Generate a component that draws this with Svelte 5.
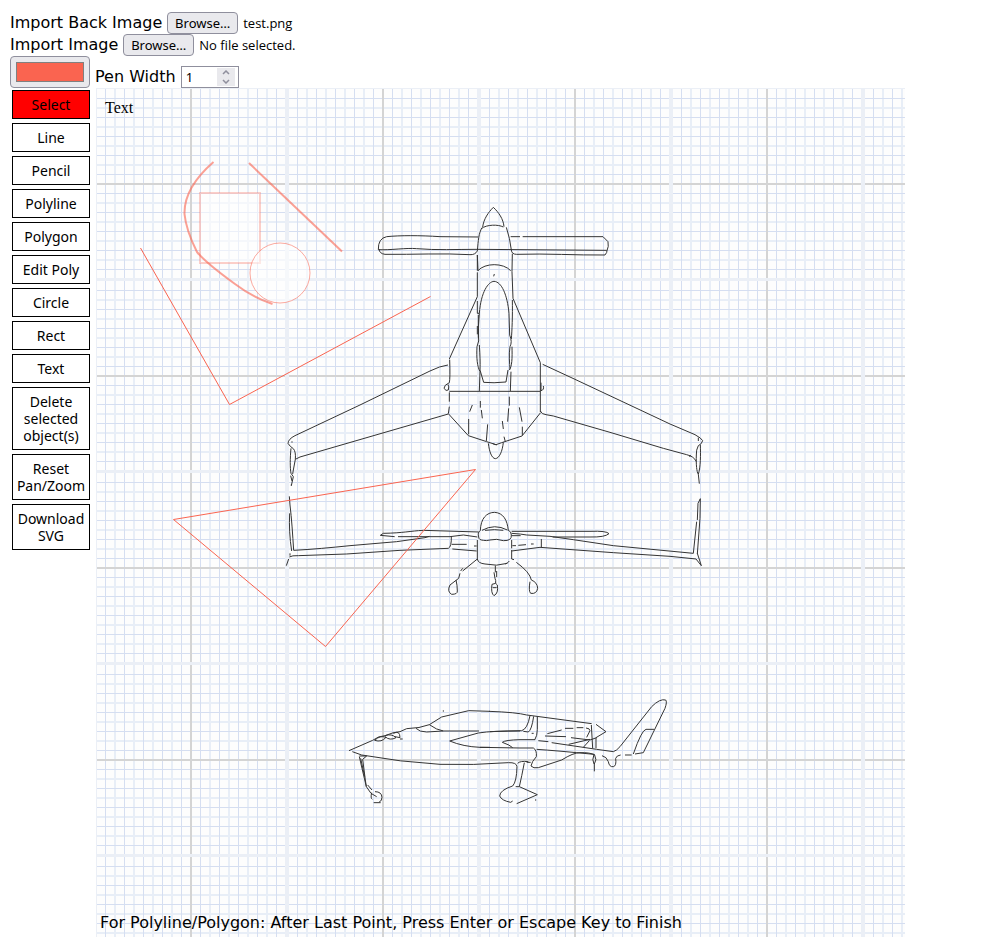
<script>
  const tools = ['Select', 'Line', 'Pencil', 'Polyline', 'Polygon', 'Edit Poly', 'Circle', 'Rect', 'Text'];
  const actions = ['Delete selected object(s)', 'Reset Pan/Zoom', 'Download SVG'];

  let active = $state('Select');
  let color = $state('#fa6450');
  let penWidth = $state(1);
  let backName = $state('test.png');
  let imageName = $state('No file selected.');
  let backInput;
  let imageInput;

  // Grid cell offsets inside one 192px tile
  const thin = [10, 29, 48, 67, 86, 105, 124, 143, 162, 181];
  const wide = [19, 38, 57, 76, 114, 133, 152, 171];

  // Aircraft blueprint, drawn in sections at three units per pixel
  const sections = [
    { x: 360, y: 195, d: 'M368 96C371 72 385 52 400 37C416 52 430 72 432 95M364 101C380 88 415 88 430 96M366 98C356 115 355 135 352 168Q345 180 330 179C250 174 160 179 75 178Q58 176 57 162M355 126L240 125C180 121 120 121 80 125Q54 130 55 164C90 166 140 158 170 161C230 166 290 163 352 163L740 166M439 97Q450 130 454 165Q455 178 470 178C560 175 650 181 735 180Q742 172 741 166M452 125H480M488 125H729L744 140Q747 155 741 167M352 180L354 227C375 203 430 203 452 227M403 237L401 244' },
    { x: 420, y: 255, d: 'M172 0V47M172 52V125L88 312M277 -4L276 50L279 130L361 323M178 175C183 110 205 80 222 79C245 80 262 120 267 175L269 240M172 138V175H178M172 213V238M178 175Q173 220 176 258L171 275C169 310 172 335 180 350L178 408M175 180V250M178 270C180 300 181 325 180 345L191 382Q220 385 258 381L264 345M277 135C278 180 276 230 274 252M269 240C275 255 275 265 270 275C266 300 269 325 270 343M276 275C277 310 276 335 268 345M273 350L271 408M88 409H361M89 314Q91 370 88 383Q72 390 72 400Q78 410 85 405Q88 395 84 388M361 323V472M363 383V407Q373 405 370 393M88 412V440M88 455L85 476L145 542L200 560L228 569L245 563L306 543L361 474M157 450L149 470M146 492V538M181 438V458M184 465L187 490M203 508L199 558M268 425V452M266 460L263 500M247 498L250 522M252 545L256 560M298 457L306 500M307 515V540M205 565C208 590 215 610 226 611C238 610 247 590 250 562M218 566L230 570' },
    { x: 270, y: 355, d: 'M534 30Q510 33 480 48L270 150L75 242Q55 252 54 265Q60 275 70 281Q78 290 76 313L70 345L68 357M76 313L90 306L345 232L535 177M63 280C60 310 60 340 63 355L70 365L64 392M62 362L66 378M66 259v4' },
    { x: 530, y: 355, d: 'M38 28L135 73L420 207L495 239Q515 250 518 257Q515 268 505 272Q498 285 499 300C498 330 500 350 505 358L508 386M511 270C512 300 512 335 505 358M31 168Q35 178 48 179L70 183L240 232L400 280L470 299Q492 304 499 320M505 248V258M478 305L483 301' },
    { x: 270, y: 485, d: 'M64 -2v4M58 34L60 60C65 100 68 150 71 196M59 85C57 120 59 160 65 198M71 196C130 193 180 188 240 182L380 170L465 158L478 154M60 205v7M58 216Q66 211 85 212L230 207L390 196L535 190Q545 186 544 153M545 178H590M547 192L620 198M56 222L49 242M626 141L460 136C420 138 400 144 340 145L331 151L374 155M384 155H540L580 150L622 156M631 137C632 100 650 82 674 82C700 84 712 105 715 137M636 136Q674 115 712 135M645 136Q674 132 700 136M631 137Q622 142 626 156Q626 165 640 166Q650 168 660 165Q680 160 700 167Q726 168 724 150Q724 139 715 136M622 165V222Q624 235 645 237Q680 245 712 235M622 222L578 258M578 250L572 258M570 265L566 280L540 300Q530 320 545 328Q563 328 562 318Q562 300 558 285M676 242V262M672 262L675 280Q678 285 677 295M666 298Q662 325 672 332Q686 325 682 300L677 295ZM668 308H680M680 258v18M612 183h8' },
    { x: 480, y: 485, d: 'M95 139H330Q380 137 387 146Q375 157 330 156H218M95 152H122M95 145Q125 147 140 150L210 154L280 164L400 182L640 205M95 198L180 187L400 203L570 214L648 222L664 242L652 205M184 162V187M95 165V190M97 182H108M115 181L138 179M153 177h8M95 195V222L102 224M88 228Q84 234 76 237M109 232Q150 262 154 285M150 290Q145 318 152 325Q170 328 173 310Q172 292 154 285M640 205L650 110M652 105L654 55L661 41L660 100L652 207' },
    { x: 340, y: 690, d: 'M27 182L98 151Q115 138 135 137Q160 126 180 125L200 116Q240 115 268 104L305 81L386 62L450 64M228 115Q238 126 260 126L310 123H417M268 104Q290 120 310 123M104 151Q125 158 138 142Q120 135 104 151M135 140Q150 153 168 143Q155 130 135 137M160 130Q180 120 180 143L165 140M180 147h8M540 123Q460 122 415 129L329 153Q370 170 420 172H450M37 185L65 195Q180 216 300 223Q400 226 505 218Q530 217 531 230Q530 275 518 288Q480 300 479 318Q485 332 512 337L518 333M310 61v4M58 200L66 235L79 290L93 310L110 320M58 198H80L68 208L76 270L79 290M62 205L74 260M83 285L96 300M95 308Q91 325 97 328M105 305Q125 305 126 322Q125 335 118 335M101 338H122' },
    { x: 490, y: 690, d: 'M-3 64Q80 67 110 75L305 101M0 125L95 122Q112 118 120 77M131 79Q125 120 115 126L100 124M142 80V118Q142 138 134 150M125 130h6M-30 172L90 174H130Q141 180 139 200Q125 215 123 228Q130 236 145 233L215 210Q250 188 270 188Q300 187 315 195M68 173Q60 165 37 157Q45 150 90 149H135M145 152L175 155M185 158L320 178L370 185Q380 182 390 170L485 50Q510 25 527 30Q532 35 525 55L460 188L435 192M140 178Q200 182 312 193M172 131L215 120M165 138L228 140M225 115H250M260 113h20M288 114Q300 115 300 122L290 142M243 143L300 150L320 143M236 163L300 148M280 172L298 152M304 105L308 175M318 103L348 125L318 143V175M312 193Q305 210 312 222M314 195Q322 210 313 222V244M336 197Q350 200 355 215Q358 232 370 230Q380 228 377 205Q380 196 392 195M405 195h20M430 192Q455 120 468 118H492M83 220Q90 212 115 215M103 218Q95 260 88 290L142 314L80 341M110 217h12M137 328v4M77 290h11' }
  ];

  function step(amount) {
    penWidth = Math.max(1, Number(penWidth) + amount);
  }
</script>

<main>
  <div class="row">
    <label for="back-image">Import Back Image</label>
    <button class="browse" type="button" onclick={() => backInput.click()}>Browse…</button>
    <input id="back-image" class="file" type="file" tabindex="-1" bind:this={backInput}
      onchange={(e) => (backName = e.currentTarget.files[0]?.name ?? 'No file selected.')} />
    <span class="filename">{backName}</span>
  </div>
  <div class="row">
    <label for="image">Import Image</label>
    <button class="browse" type="button" onclick={() => imageInput.click()}>Browse…</button>
    <input id="image" class="file" type="file" tabindex="-1" bind:this={imageInput}
      onchange={(e) => (imageName = e.currentTarget.files[0]?.name ?? 'No file selected.')} />
    <span class="filename">{imageName}</span>
  </div>
  <div class="pen">
    <input class="color" type="color" aria-label="Pen color" bind:value={color} />
    <label for="pen-width">Pen Width</label>
    <div class="number">
      <input id="pen-width" type="number" min="1" bind:value={penWidth} />
      <div class="stepper">
        <button type="button" aria-label="Increase" onclick={() => step(1)}>
          <svg width="8" height="5" viewBox="0 0 8 5"><path d="M1 4L4 1L7 4" /></svg>
        </button>
        <button type="button" aria-label="Decrease" onclick={() => step(-1)}>
          <svg width="8" height="5" viewBox="0 0 8 5"><path d="M1 1L4 4L7 1" /></svg>
        </button>
      </div>
    </div>
  </div>

  <div class="workspace">
    <div class="tools">
      {#each tools as tool}
        <button type="button" class:active={active === tool} onclick={() => (active = tool)}>{tool}</button>
      {/each}
      {#each actions as action}
        <button type="button">{action}</button>
      {/each}
    </div>

    <svg class="canvas" height="849" aria-label="Drawing canvas">
      <defs>
        <pattern id="grid" x="0" y="0" width="192" height="192" patternUnits="userSpaceOnUse">
          <rect width="192" height="192" fill="#fdfdfd" />
          {#each wide as p}
            <rect x={p} y="0" width="2" height="192" fill="#e8eef7" />
            <rect x="0" y={p} width="192" height="2" fill="#e8eef7" />
          {/each}
          {#each thin as p}
            <rect x={p} y="0" width="1" height="192" fill="#d5def1" />
            <rect x="0" y={p} width="192" height="1" fill="#d5def1" />
          {/each}
          <rect x="95" y="0" width="2" height="192" fill="#d4d4d4" />
          <rect x="0" y="95" width="192" height="2" fill="#d4d4d4" />
          <path d="M0 0H2V190H192V192H0ZM190 0H192V192H190ZM0 0H192V1H0Z" fill="#ebeff6" />
        </pattern>
      </defs>
      <rect x="1" width="100%" height="849" fill="url(#grid)" />
      <g transform="translate(-95 -88)">
        {#each sections as section}
          <path class="ink" transform="translate({section.x} {section.y}) scale(0.33333)" d={section.d} />
        {/each}
        <g fill="none" stroke={color}>
          <rect x="200" y="193" width="60" height="70" fill="#fff" fill-opacity="0.55" stroke-width="2" stroke-opacity="0.3" />
          <circle cx="280" cy="273" r="30" fill="#fff" fill-opacity="0.55" stroke-opacity="0.55" />
          <g stroke-width="2" opacity="0.6">
            <path d="M249 163L342 251.5" />
            <path d="M213.5 162C194 179 184 197 184.5 214Q186 230 197 252Q206 263 235 284Q252 297 272.5 304" />
          </g>
          <path d="M140.5 248L229.5 404.5L430.5 296.5" />
          <path d="M173.5 519.5L475.5 469.5L325.5 646.5Z" />
        </g>
        <text class="serif" x="105" y="113">Text</text>
        <text x="100" y="928">For Polyline/Polygon: After Last Point, Press Enter or Escape Key to Finish</text>
      </g>
    </svg>
  </div>
</main>

<style>
  :global(body) {
    background: #fff;
  }
  main {
    padding: 12px 10px 10px;
    font: 16px/22px "DejaVu Sans", sans-serif;
    color: #000;
  }
  button,
  input {
    box-sizing: border-box;
    margin: 0;
    color: #000;
    font-family: "Noto Sans", "Open Sans", sans-serif;
  }
  .row {
    display: flex;
    align-items: center;
    gap: 5px;
    height: 22px;
  }
  .browse {
    width: 71px;
    height: 22px;
    padding: 0;
    border: 1px solid #8f8f9d;
    border-radius: 4px;
    background: #e9e9ed;
    font-size: 13px;
    line-height: 18px;
  }
  .file {
    position: absolute;
    width: 1px;
    height: 1px;
    opacity: 0;
    pointer-events: none;
  }
  .filename {
    font: 13px/22px "Open Sans", "Noto Sans", sans-serif;
  }
  .pen {
    display: flex;
    align-items: flex-end;
    height: 32px;
    gap: 5px;
  }
  .color {
    width: 80px;
    height: 32px;
    padding: 5px;
    border: 1px solid #8f8f9d;
    border-radius: 4px;
    background: #e9e9ed;
  }
  .color::-webkit-color-swatch-wrapper {
    padding: 0;
  }
  .color::-webkit-color-swatch {
    border: 1px solid #808080;
    border-radius: 0;
  }
  .number {
    display: flex;
    align-items: center;
    box-sizing: border-box;
    width: 58px;
    height: 22px;
    padding: 0 3px 0 4px;
    border: 1px solid #8f8f9d;
  }
  .number input {
    flex: 1;
    min-width: 0;
    height: 20px;
    padding: 0;
    border: 0;
    outline: 0;
    appearance: textfield;
    font-size: 13px;
  }
  .number input::-webkit-inner-spin-button {
    appearance: none;
    margin: 0;
  }
  .stepper {
    display: flex;
    flex-direction: column;
    width: 18px;
    height: 18px;
  }
  .stepper button {
    display: flex;
    flex: 1;
    align-items: center;
    justify-content: center;
    padding: 0;
    border: 0;
    background: #e9e9ed;
  }
  .stepper path {
    fill: none;
    stroke: #8f8f9d;
    stroke-width: 1.5;
  }
  .workspace {
    display: flex;
    align-items: flex-start;
    gap: 3px;
  }
  .tools {
    display: flex;
    flex: none;
    flex-direction: column;
    gap: 4px;
    width: 78px;
    padding: 2px;
  }
  .tools button {
    padding: 5px 0;
    border: 1px solid #000;
    background: #fff;
    font-size: 14px;
    line-height: 17px;
  }
  .tools .active {
    background: #f00;
  }
  .canvas {
    display: block;
    flex: 1;
    min-width: 0;
    max-width: 810px;
    overflow: hidden;
  }
  .ink {
    fill: none;
    stroke: #333;
    stroke-width: 3;
  }
  .canvas text {
    fill: #000;
    font: 16px "DejaVu Sans", sans-serif;
  }
  .canvas .serif {
    font-family: "Liberation Serif", serif;
  }
</style>
